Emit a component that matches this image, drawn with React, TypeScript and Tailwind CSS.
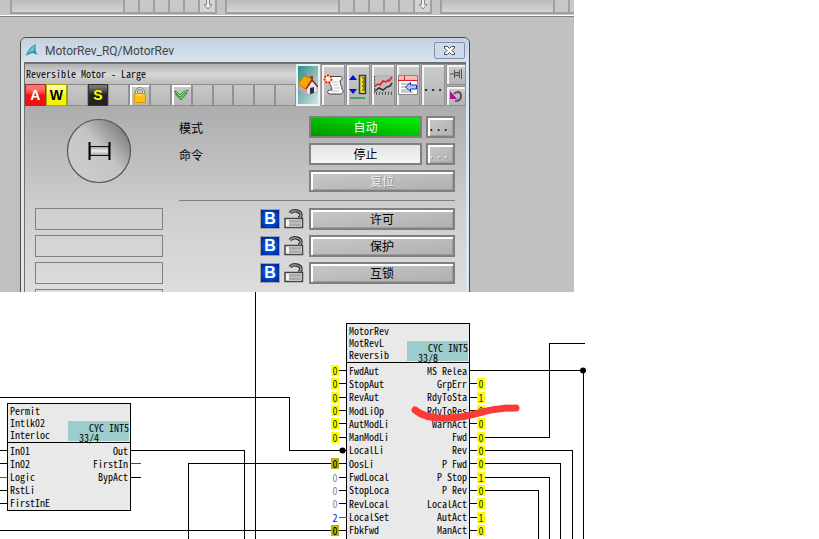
import React from "react";
import clsx from "clsx";

const MONO = "font-['Noto_Sans_Mono_CJK_SC','Liberation_Mono',monospace]";
const CJK = "font-['Liberation_Sans','Noto_Sans_CJK_SC',sans-serif]";

const RAISED =
  "border-2 border-[#808080] bg-linear-to-br from-[#c8c8c8] to-[#b0b0b0] shadow-[inset_2px_2px_0_#fff,inset_-1px_-1px_0_#9c9c9c]";

interface ButtonProps {
  label: string;
  className?: string;
  disabled?: boolean;
}

const PanelButton: React.FC<ButtonProps> = ({ label, className, disabled }) => {
  return (
    <button
      disabled={disabled}
      className={clsx(
        "h-[22px] pt-px flex items-center justify-center text-xs leading-none",
        RAISED,
        disabled ? "text-[#efefef] text-shadow-[1px_1px_0_#909090]" : "text-black",
        className
      )}
    >
      {label}
    </button>
  );
};

/* ---------- icons ---------- */

const LogoIcon = () => (
  <svg width="14" height="14" viewBox="0 0 14 14">
    <path d="M11 1C6 3 2 8 1 13c3-2 5-3 7-3l5 2c-3-3-3-7-2-11z" fill="#2f8f94" />
    <path d="M10 2C6 5 4 8 2 11c3-2 5-3 7-3 0-2 0-4 1-6z" fill="#74c5c6" />
  </svg>
);

const CloseIcon = () => (
  <svg width="13" height="11" viewBox="0 0 13 11">
    <path
      d="M1.500 1.500h3l2 2 2-2h3v1.500L9 5.500l2.500 2.500v1.500h-3l-2-2-2 2h-3V8L4 5.500 1.500 3z"
      fill="#fff"
      stroke="#41464f"
    />
  </svg>
);

const PadlockIcon = () => (
  <svg width="14" height="17" viewBox="0 0 14 17">
    <path d="M3.500 7V4.500a3.500 3 0 0 1 7 0V7" fill="none" stroke="#777" strokeWidth="2.500" />
    <path d="M3.500 7V4.500a3.500 3 0 0 1 7 0V7" fill="none" stroke="#eee" strokeWidth="1" />
    <rect x="1.500" y="6.500" width="11" height="9" fill="#ffc20e" stroke="#d89a00" />
    <path d="M3 8h7" stroke="#ffe27a" />
  </svg>
);

const CheckIcon = () => (
  <svg width="16" height="12" viewBox="0 0 16 12">
    <path d="M1 2l3 1 3 3 3-3 5-2-2 4-5 4z" fill="#a8eaa0" stroke="#237a2a" strokeWidth=".8" />
    <path d="M2 5l2 0 3 3 4-4 3 0-6 7z" fill="#5fd05c" stroke="#237a2a" strokeWidth=".8" />
  </svg>
);

const HomeIcon = () => (
  <svg width="20" height="21" viewBox="0 0 20 21">
    <path d="M1 10l8 3v7l-8-5z" fill="#c9a8a0" />
    <path d="M8 13l6-7 5 5v6L9 20z" fill="#efe4e8" stroke="#9a8588" strokeWidth=".5" />
    <path d="M12 1h3v5h-3z" fill="#9c3b2c" />
    <path d="M0 9l6-8 8 3-6 10z" fill="#f7a600" stroke="#b86a00" strokeWidth=".7" />
    <path d="M8 14l6-9 6 7" fill="none" stroke="#8f2b22" strokeWidth="1.500" />
    <path d="M12 13l4-1v6l-4 1z" fill="#1d3050" />
  </svg>
);

const ScriptIcon = () => (
  <svg width="21" height="22" viewBox="0 0 21 22">
    <path
      d="M7 2.500h11c2 1 1 4-1 4 0 4 2 6 2 9 2 1 1 4-1 4.500H7c-3 0-3-4 0-4h2c0-4-3-6-3-9z"
      fill="#fff"
      stroke="#444"
    />
    <path d="M9 8h6M10 11h6M11 14h6M9 17h7" stroke="#bbb" />
    <circle cx="5" cy="5" r="3.500" fill="#fffbd0" stroke="#f02010" strokeWidth="2" strokeDasharray="2 1" />
  </svg>
);

const RangeIcon = () => (
  <svg width="20" height="28" viewBox="0 0 20 28">
    <path d="M1 9l4-5 4 5zM1 18l4 5 4-5z" fill="#0010d0" />
    <rect x="11.500" y="4.500" width="6" height="18" fill="#ffe800" stroke="#2a3a88" strokeWidth="1.500" />
    <path d="M14 7h3M15 9h2M14 11h3M15 13h2M14 15h3M15 17h2M14 19h3" stroke="#222" />
    <path d="M2 27h15" stroke="#3fa66a" strokeWidth="2" />
  </svg>
);

const TrendIcon = () => (
  <svg width="20" height="21" viewBox="0 0 20 21">
    <rect x="2" y="1" width="17" height="16" fill="#bdbdbd" stroke="#aaa" />
    <path d="M1.500 1v17" stroke="#555" strokeDasharray="2 1" />
    <path d="M3 18.500h16" stroke="#555" strokeDasharray="1 2" strokeWidth="3" />
    <path d="M2 11l3-2 2 1 3-4 3 1 2-2 1 1 3-4" fill="none" stroke="#f01818" strokeWidth="1.500" />
    <path d="M2 16l4-3 4 2 4-3 3-1 2-3" fill="none" stroke="#333" strokeWidth="1.500" />
  </svg>
);

const PageIcon = () => (
  <svg width="21" height="21" viewBox="0 0 21 21">
    <rect x=".5" y=".5" width="19" height="19" fill="#fff" stroke="#888" />
    <path d="M1 1h18v4H1z" fill="#ffb8b8" />
    <path d="M0 5.500h20M6.500 1v4" stroke="#e02020" />
    <path d="M3 9h8M3 12h5M3 15h7M3 17h12" stroke="#999" />
    <path d="M7.500 12l5-4.500v2.500h6v4h-6v2.500z" fill="#a8c8ff" stroke="#1a2d9c" />
  </svg>
);

const PinIcon = () => (
  <svg width="12" height="10" viewBox="0 0 12 10">
    <path d="M5 3h5v4H5z" fill="#999" />
    <path d="M0 5h4M4.500 1v8M5 3.500h4M5 6.500h4M9.500 1v8M11.500 0v10" fill="none" stroke="#555" />
  </svg>
);

const UndoIcon = () => (
  <svg width="14" height="14" viewBox="0 0 14 14">
    <path d="M5 5c2-3 7-3 7 2 0 3-2 5-6 5" fill="none" stroke="#6b4a6b" strokeWidth="2" />
    <path d="M1 2v8h7z" fill="#a5108f" />
  </svg>
);

const OpenLockIcon = () => (
  <svg width="20" height="20" viewBox="0 0 20 20">
    <path d="M6 4c3-4 11-2 11 2 0 2-1 3-3 3" fill="none" stroke="#333" strokeWidth="3.500" />
    <path d="M6 4c3-4 11-2 11 2 0 2-1 3-3 3" fill="none" stroke="#aaa" strokeWidth="1.200" />
    <rect x="1" y="9.500" width="17.500" height="9" fill="#f4f4f4" stroke="#444" strokeWidth="1.500" />
    <path d="M5 11h12v6H5z" fill="#aaa" />
    <path d="M5 14h12" stroke="#ccc" />
  </svg>
);

const MotorSymbol = () => (
  <svg width="66" height="66" viewBox="0 0 66 66">
    <defs>
      <linearGradient id="disc" x1="1" y1="0.100" x2="0.200" y2="0.800">
        <stop offset="0" stopColor="#6e6e6e" />
        <stop offset=".55" stopColor="#c4c4c4" />
        <stop offset="1" stopColor="#cbcbcb" />
      </linearGradient>
      <linearGradient id="shaft" x1="0" y1="0" x2="0" y2="1">
        <stop offset="0" stopColor="#999" />
        <stop offset=".5" stopColor="#eee" />
        <stop offset="1" stopColor="#999" />
      </linearGradient>
    </defs>
    <circle cx="33" cy="33" r="31.500" fill="url(#disc)" stroke="#555" strokeWidth="1.200" />
    <rect x="24" y="28.500" width="19" height="9" fill="url(#shaft)" stroke="#111" />
    <path d="M23.500 24v18M43.500 24v18" stroke="#000" strokeWidth="2" />
  </svg>
);

/* ---------- faceplate ---------- */

const TOOLS = [
  { name: "Home", icon: <HomeIcon /> },
  { name: "Messages", icon: <ScriptIcon /> },
  { name: "Limits", icon: <RangeIcon /> },
  { name: "Trend", icon: <TrendIcon /> },
  { name: "Page", icon: <PageIcon /> },
];

const TOOL_FRAME =
  "border border-[#909090] bg-linear-to-b from-[#cccccc] to-[#b4b4b4] shadow-[inset_2px_2px_0_#f4f4f4] flex items-center justify-center";
const STATUS_CELL = "flex-1 h-[22px] flex items-center justify-center border text-sm leading-none font-bold";
const EMPTY_CELL = "border-[#909090] bg-linear-to-b from-[#c8c8c8] to-[#b8b8b8]";

const StatusBar = () => {
  return (
    <div className="flex font-['Liberation_Sans',sans-serif]">
      <span className={clsx(STATUS_CELL, "border-[#a03030] bg-linear-to-b from-[#ff7070] from-20% to-[#f01010] to-50% text-white")}>
        A
      </span>
      <span className={clsx(STATUS_CELL, "border-[#a8a800] bg-linear-to-b from-[#ffff90] from-20% to-[#f4f400] to-50% text-black")}>
        W
      </span>
      <span className={clsx(STATUS_CELL, EMPTY_CELL)} />
      <span className={clsx(STATUS_CELL, "border-[#333] bg-linear-to-b from-[#777] from-10% to-[#222] to-50% text-[#ffff00]")}>
        S
      </span>
      <span className={clsx(STATUS_CELL, EMPTY_CELL)} />
      <span className={clsx(STATUS_CELL, EMPTY_CELL, "shadow-[inset_2px_2px_0_#fff]")}>
        <PadlockIcon />
      </span>
      <span className={clsx(STATUS_CELL, EMPTY_CELL)} />
      <span className={clsx(STATUS_CELL, EMPTY_CELL, "shadow-[inset_2px_2px_0_#fff]")}>
        <CheckIcon />
      </span>
      {[1, 2, 3, 4, 5].map((n) => (
        <span key={n} className={clsx(STATUS_CELL, EMPTY_CELL)} />
      ))}
    </div>
  );
};

const Toolbar = () => {
  return (
    <div className="flex gap-px">
      {TOOLS.map((tool, i) => (
        <button
          key={tool.name}
          aria-label={tool.name}
          className={clsx(
            "w-6 overflow-hidden",
            i === 0
              ? "border-2 border-[#e8f4f4] bg-linear-to-br from-[#1f8f8a] to-[#d4e4e4] flex items-center justify-center"
              : TOOL_FRAME
          )}
        >
          <span className="shrink-0">{tool.icon}</span>
        </button>
      ))}
      <button className={clsx("w-6 text-sm leading-none", TOOL_FRAME, MONO)}>...</button>
      <div className="flex flex-col gap-px w-5">
        <button aria-label="Pin" className={clsx("flex-1", TOOL_FRAME)}>
          <PinIcon />
        </button>
        <button aria-label="Back" className={clsx("flex-1", TOOL_FRAME)}>
          <UndoIcon />
        </button>
      </div>
    </div>
  );
};

const Faceplate = () => {
  return (
    <div className="w-[450px] ml-5 mt-5 shrink-0 rounded-t-md border border-[#4a4a4a] bg-[#dbe7f3] px-[3px]">
      <div className="h-6 flex items-center gap-[6px] -mx-[3px] px-1 rounded-t-md bg-linear-to-b from-[#c3d0de] to-[#d8e4f1]">
        <LogoIcon />
        <h1 className="flex-1 pt-px text-xs text-[#454545] font-[Roboto,'Open_Sans',sans-serif]">
          MotorRev_RQ/MotorRev
        </h1>
        <button
          aria-label="Close"
          className="w-[31px] h-[17px] rounded-xs border border-[#8290ad] bg-[#cddae8] flex items-center justify-center"
        >
          <CloseIcon />
        </button>
      </div>
      <div className="border-t-2 border-l border-[#707070] bg-linear-to-b from-[#ababab] from-15% via-[#cfcfcf] via-60% to-[#e0e0e0]">
        <div className="flex h-[42px]">
          <div className="flex-1">
            <p
              className={clsx(
                "h-5 pl-px text-[10px] leading-5 text-black bg-linear-to-b from-[#b0b0b0] via-[#d8d8d8] to-[#bcbcbc] whitespace-nowrap",
                MONO
              )}
            >
              Reversible Motor - Large
            </p>
            <StatusBar />
          </div>
          <Toolbar />
        </div>

        <div className={clsx("flex gap-4 pl-[10px] pr-[11px] pt-[10px]", CJK)}>
          <div className="w-32">
            <div className="h-[92px] pt-[2px] flex justify-center items-start">
              <MotorSymbol />
            </div>
            <div className="flex flex-col gap-[5px]">
              {[1, 2, 3, 4].map((n) => (
                <div key={n} className="h-[22px] border border-[#808080]" />
              ))}
            </div>
          </div>

          <div className="flex-1">
            <div className="flex flex-col gap-[5px] h-[85px] border-b border-[#808080] text-xs">
              <div className="flex items-center gap-1">
                <span className="flex-1 pt-1">模式</span>
                <output className="w-[113px] h-[22px] pt-px border-2 border-[#808080] bg-linear-to-tr from-[#009400] to-[#00f400] text-white flex items-center justify-center leading-none">
                  自动
                </output>
                <PanelButton label="..." className="w-[29px] pr-1 font-['Liberation_Mono',monospace]" />
              </div>
              <div className="flex items-center gap-1">
                <span className="flex-1 pt-1">命令</span>
                <output className="w-[113px] h-[22px] pt-px border-2 border-[#808080] bg-linear-to-b from-[#e4e4e4] to-[#f6f6f6] flex items-center justify-center leading-none">
                  停止
                </output>
                <PanelButton disabled label="..." className="w-[29px] pr-1 font-['Liberation_Mono',monospace]" />
              </div>
              <PanelButton disabled label="复位" className="w-[146px] self-end" />
            </div>
            <div className="flex flex-col gap-[5px] pt-[7px]">
              {["许可", "保护", "互锁"].map((label) => (
                <div key={label} className="flex items-center justify-end gap-1">
                  <span className="size-5 border border-[#a0a0a0] bg-radial from-[#0a78ff] to-[#001890] text-white text-base leading-none font-bold flex items-center justify-center">
                    B
                  </span>
                  <OpenLockIcon />
                  <PanelButton label={label} className="w-[146px] ml-px" />
                </div>
              ))}
            </div>
          </div>
        </div>
      </div>
    </div>
  );
};

const OverviewStrip = () => {
  return (
    <div className="flex shrink-0 gap-2 h-[17px] pl-[10px] border-b border-[#808080] bg-[#c4c4c4] shadow-[inset_0_-1px_0_#fff]">
      {[1, 2, 3].map((group) => (
        <div key={group} className="flex shrink-0 h-[14px] border-l-2 border-b-2 border-[#a0a0a0]">
          <div className="w-[113px] border-r-2 border-[#a0a0a0] bg-linear-to-b from-[#bcbcbc] to-[#d4d4d4]" />
          {[1, 2, 3, 4, 5].map((n) => (
            <div key={n} className="w-[15px] border-r-2 border-[#a0a0a0] bg-[#c8c8c8]" />
          ))}
          <div className="w-[17px] border-r-2 border-[#a0a0a0] bg-[#d4d4d4] flex justify-center">
            <svg width="10" height="10" viewBox="0 0 10 10">
              <path d="M3.500 0v4.500H1L5 9l4-4.500H6.500V0" fill="#eee" stroke="#888" />
            </svg>
          </div>
        </div>
      ))}
    </div>
  );
};

/* ---------- function chart ---------- */

type Tone = "on" | "forced" | "open" | "number";

interface Port {
  label: string;
  value?: string;
  tone?: Tone;
}

interface NodeProps {
  x: number;
  y: number;
  titles: string[];
  sheet: string;
  inputs: Port[];
  outputs: Port[];
  rowsClass: string;
}

const TONES: Record<Tone, string> = {
  on: "bg-[#ffff00] text-[#333300]",
  forced: "bg-[#bcb400] text-black",
  open: "text-[#888]",
  number: "text-[#1010e0]",
};

const PortValue: React.FC<{ port: Port }> = ({ port }) => (
  <span className={clsx("w-2 h-[11px] leading-[11px] text-center", TONES[port.tone ?? "on"])}>
    {port.value}
  </span>
);

const ChartNode: React.FC<NodeProps> = ({ x, y, titles, sheet, inputs, outputs, rowsClass }) => {
  return (
    <div
      className="absolute w-[124px] border border-black bg-[#e9e9e9] text-[10px] leading-3 text-black whitespace-pre"
      style={{ left: x, top: y }}
    >
      <div className="relative h-[39px] border-b border-black pt-px pl-[2px]">
        {titles.map((title) => (
          <p key={title}>{title}</p>
        ))}
        <div className="absolute right-px bottom-px w-[61px] h-5 bg-[#9ccccc] pt-[2px] leading-[10px]">
          <p className="text-right">CYC INT5</p>
          <p className="pl-[11px]">{sheet}</p>
        </div>
      </div>
      <div className={clsx("grid auto-rows-fr pt-px", rowsClass)}>
        {inputs.map((input, i) => {
          const output = outputs[i];
          return (
            <div key={input.label} className="relative flex items-center justify-between px-[2px]">
              <span>{input.label}</span>
              <span>{output?.label}</span>
              {input.value && (
                <span className="absolute right-full inset-y-0 flex items-center">
                  <PortValue port={input} />
                  <i className={clsx("w-2 h-px", input.tone === "number" ? "bg-[#008080]" : "bg-black")} />
                </span>
              )}
              {output?.value && (
                <span className="absolute left-full inset-y-0 flex items-center">
                  <i className="w-2 h-px bg-black" />
                  <PortValue port={output} />
                </span>
              )}
            </div>
          );
        })}
      </div>
    </div>
  );
};

const MOTOR_INPUTS: Port[] = [
  { label: "FwdAut", value: "0" },
  { label: "StopAut", value: "0" },
  { label: "RevAut", value: "0" },
  { label: "ModLiOp", value: "0" },
  { label: "AutModLi", value: "0" },
  { label: "ManModLi", value: "0" },
  { label: "LocalLi" },
  { label: "OosLi", value: "0", tone: "forced" },
  { label: "FwdLocal", value: "0", tone: "open" },
  { label: "StopLoca", value: "0", tone: "open" },
  { label: "RevLocal", value: "0", tone: "open" },
  { label: "LocalSet", value: "2", tone: "number" },
  { label: "FbkFwd", value: "0", tone: "forced" },
];

const MOTOR_OUTPUTS: Port[] = [
  { label: "MS Relea" },
  { label: "GrpErr", value: "0" },
  { label: "RdyToSta", value: "1" },
  { label: "RdyToRes", value: "0" },
  { label: "WarnAct", value: "0" },
  { label: "Fwd", value: "0" },
  { label: "Rev", value: "0" },
  { label: "P Fwd", value: "0" },
  { label: "P Stop", value: "1" },
  { label: "P Rev", value: "0" },
  { label: "LocalAct", value: "0" },
  { label: "AutAct", value: "1" },
  { label: "ManAct", value: "0" },
];

const Chart = () => {
  return (
    <section className={clsx("relative flex-1 overflow-hidden bg-white", MONO)}>
      <svg className="absolute left-0 top-0 size-full" fill="none" stroke="#000" shapeRendering="crispEdges">
        <path d="M255.500 0v400" />
        <path d="M0 105.500h289.500v53h57" />
        <path d="M130 158.500h114.500v300" />
        <path d="M331 171.500H188.500v300" />
        <path d="M0 238.500h331" />
        <path d="M0 158.500h7M0 171.500h7M0 198.500h7M0 211.500h7M130 185.500h11" />
        <path d="M0 185.500h7" stroke="#008080" />
        <path d="M130 171.500h11" stroke="#008000" />
        <path d="M470 78.500h113.500v400" />
        <path d="M485 145.500h64.500v-94h35" />
        <path d="M485 158.500h87.500v300M485 171.500h75.500v300M485 185.500h64.500v300M485 198.500h53.500v300" />
      </svg>
      <ChartNode
        x={7}
        y={111}
        titles={["Permit", "Intlk02", "Interloc"]}
        sheet="33/4"
        inputs={[
          { label: "In01" },
          { label: "In02" },
          { label: "Logic" },
          { label: "RstLi" },
          { label: "FirstInE" },
        ]}
        outputs={[{ label: "Out" }, { label: "FirstIn" }, { label: "BypAct" }]}
        rowsClass="h-[67px]"
      />
      <ChartNode
        x={346}
        y={31}
        titles={["MotorRev", "MotRevL", "Reversib"]}
        sheet="33/8"
        inputs={MOTOR_INPUTS}
        outputs={MOTOR_OUTPUTS}
        rowsClass="h-[173px] box-content pb-3"
      />
      <svg className="absolute left-0 top-0 size-full" fill="none">
        <circle cx="342.500" cy="158.500" r="3" fill="#000" />
        <circle cx="583" cy="78.500" r="3" fill="#000" />
        <path
          d="M415 118c8 7 20 9 36 8 22-1 36-9 48-9 7-1 12-1 17-1"
          stroke="#fb3a38"
          strokeWidth="7"
          strokeLinecap="round"
        />
      </svg>
    </section>
  );
};

const App = () => {
  return (
    <main className="h-screen flex flex-col overflow-hidden bg-white">
      <section className="h-[292px] w-[70%] min-w-[574px] shrink-0 flex flex-col overflow-hidden bg-[#c0c0c0]">
        <OverviewStrip />
        <Faceplate />
      </section>
      <Chart />
    </main>
  );
};

export default App;
